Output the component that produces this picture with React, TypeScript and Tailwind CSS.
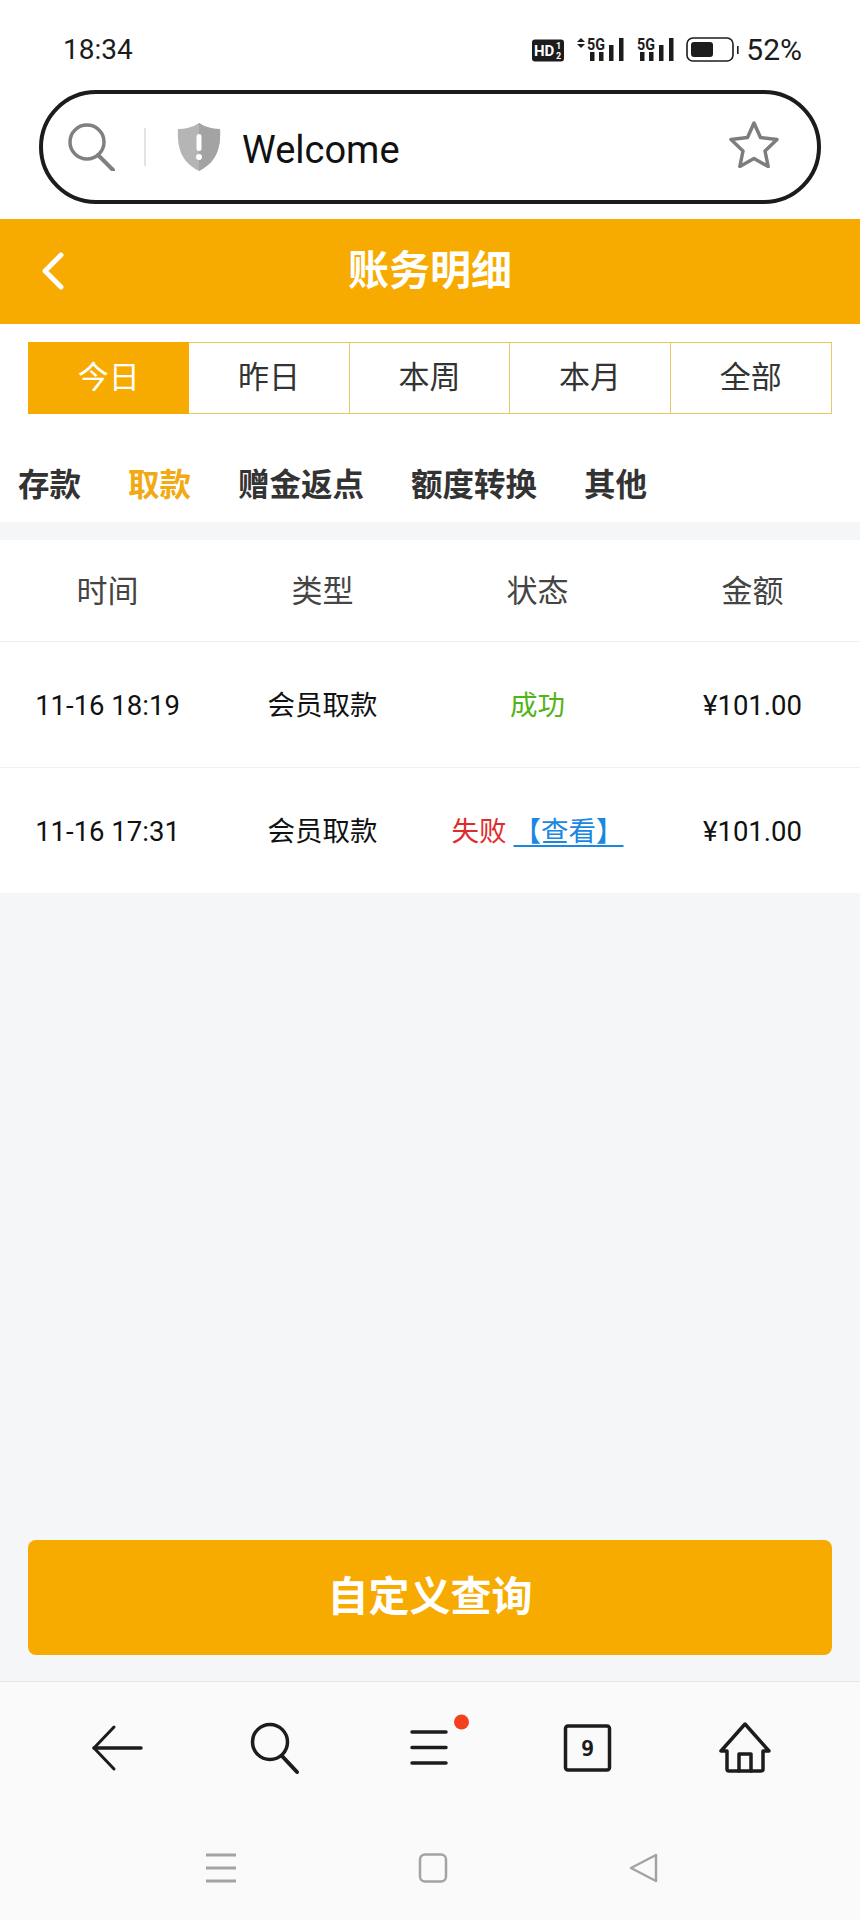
import React from "react";

const ranges = ["今日", "昨日", "本周", "本月", "全部"];
const kinds = ["存款", "取款", "赠金返点", "额度转换", "其他"];
const columns = ["时间", "类型", "状态", "金额"];

const StatusIcons = () => (
  <div className="flex items-center">
    <svg width="33" height="23" viewBox="0 0 33 23" className="mr-[11px] overflow-visible">
      <rect width="32" height="22" y="0.5" rx="3" fill="#1c1c1c" />
      <text x="2" y="17" fontSize="15" fontWeight="700" fill="#fff" fontFamily="Roboto">HD</text>
      <text x="24" y="10" fontSize="9" fontWeight="700" fill="#fff" fontFamily="Roboto">1</text>
      <text x="24" y="20" fontSize="9" fontWeight="700" fill="#fff" fontFamily="Roboto">2</text>
    </svg>
    <svg width="48" height="26" viewBox="0 0 48 26" className="mr-[13px] overflow-visible">
      <path d="M5 1l4 4H1zM5 11l4-4H1z" fill="#1c1c1c" />
      <text x="11" y="13" fontSize="16" fontWeight="700" fill="#1c1c1c" fontFamily="Roboto" textLength="18" lengthAdjust="spacingAndGlyphs">5G</text>
      <rect x="14" y="15" width="4.500" height="9" fill="#1c1c1c" />
      <rect x="23" y="15" width="4.500" height="9" fill="#1c1c1c" />
      <rect x="33" y="8" width="4.500" height="16" fill="#1c1c1c" />
      <rect x="43" y="1" width="4.500" height="23" fill="#1c1c1c" />
    </svg>
    <svg width="37" height="26" viewBox="0 0 37 26" className="mr-[12px] overflow-visible">
      <text x="0" y="13" fontSize="16" fontWeight="700" fill="#1c1c1c" fontFamily="Roboto" textLength="18" lengthAdjust="spacingAndGlyphs">5G</text>
      <rect x="3" y="15" width="4.500" height="9" fill="#1c1c1c" />
      <rect x="12" y="15" width="4.500" height="9" fill="#1c1c1c" />
      <rect x="22" y="8" width="4.500" height="16" fill="#1c1c1c" />
      <rect x="32" y="1" width="4.500" height="23" fill="#1c1c1c" />
    </svg>
    <svg width="55" height="26" viewBox="0 0 55 26" className="mr-[5px]">
      <rect x="1" y="1" width="46" height="23" rx="6" fill="none" stroke="#1c1c1c" strokeWidth="1.6" />
      <rect x="5" y="5" width="22" height="15" rx="3" fill="#1c1c1c" />
      <rect x="51" y="9" width="1.600" height="8" fill="#1c1c1c" />
    </svg>
    <span className="text-[30px] text-[#1c1c1c] leading-none">52%</span>
  </div>
);

const BackArrow = () => (
  <svg width="60" height="60" viewBox="0 0 60 60" fill="none" stroke="#1c1c1c" strokeLinecap="round" strokeLinejoin="round">
    <path d="M6 30h47" strokeWidth="3.5" />
    <path d="M26 9L6 30l20 21" strokeWidth="3" />
  </svg>
);

const SearchGlyph = () => (
  <svg width="60" height="60" viewBox="0 0 60 60" fill="none" stroke="#1c1c1c" strokeLinecap="round">
    <circle cx="25" cy="24" r="17.500" strokeWidth="3.5" />
    <path d="M37 38l15 16" strokeWidth="4" />
  </svg>
);

const MenuGlyph = () => (
  <svg width="60" height="60" viewBox="0 0 60 60" fill="none" className="overflow-visible">
    <path d="M10 14h34M10 29.500h34M10 45h34" stroke="#1c1c1c" strokeWidth="3.5" strokeLinecap="round" />
    <circle cx="59.500" cy="4" r="7.500" fill="#f5401e" />
  </svg>
);

const TabsGlyph = () => (
  <svg width="60" height="60" viewBox="0 0 60 60" fill="none">
    <rect x="7.500" y="8" width="44" height="44" rx="2.500" stroke="#1c1c1c" strokeWidth="3.5" />
    <text x="29.500" y="38" textAnchor="middle" fontSize="22" fontWeight="700" fill="#1c1c1c" fontFamily="DejaVu Sans Mono">9</text>
  </svg>
);

const HomeGlyph = () => (
  <svg width="60" height="60" viewBox="0 0 60 60" fill="none" stroke="#1c1c1c" strokeWidth="3.5" strokeLinejoin="round" strokeLinecap="round">
    <path d="M30 6L6 33h6v18a2 2 0 0 0 2 2h32a2 2 0 0 0 2-2V33h6z" />
    <path d="M24 53V36h12v17" />
  </svg>
);

export default function App() {
  return (
    <div className="flex flex-col w-[860px] h-[1920px] bg-[#f4f6f8] font-['Roboto','Noto_Sans_CJK_SC',sans-serif]">
      <div className="bg-white">
        {/* status bar */}
        <div className="flex items-center justify-between h-[90px] pl-[63px] pr-[58px] pt-[10px]">
          <span className="text-[28px] text-[#1c1c1c] leading-none">18:34</span>
          <StatusIcons />
        </div>

        {/* browser address bar */}
        <div className="flex items-center h-[114px] mx-[39px] mb-[15px] pl-[24px] pr-[38px] bg-white border-[4px] border-[#1c1c1c] rounded-[57px]">
          <svg width="48" height="48" viewBox="0 0 48 48" fill="none" stroke="#808080" strokeLinecap="round">
            <circle cx="20" cy="19" r="17" strokeWidth="3.5" />
            <path d="M31 32l15 15" strokeWidth="4" />
          </svg>
          <div className="w-[2px] h-[38px] ml-[29px] mr-[31px] bg-[#e4e4e4]" />
          <svg width="44" height="48" viewBox="0 0 44 48">
            <path d="M22 0c6 4 13 6 21 6 1 18-3 33-21 42C4 39 0 24 1 6c8 0 15-2 21-6z" fill="#b5b5b5" />
            <path d="M22 0c6 4 13 6 21 6 1 18-3 33-21 42z" fill="#a3a3a3" />
            <rect x="19.500" y="11" width="5" height="17" rx="2.500" fill="#fff" />
            <circle cx="22" cy="34" r="3" fill="#fff" />
          </svg>
          <span className="ml-[21px] pt-[5px] text-[38px] text-[#111] leading-none">Welcome</span>
          <svg width="50" height="48" viewBox="0 0 50 48" className="ml-auto mb-[6px]" fill="none" stroke="#7d7d7d" strokeWidth="3.5" strokeLinejoin="round">
            <path d="M25 3l6.500 14.500 16.500 2-12 11.500 3.200 15.500L25 38.500 10.800 46.500 14 31 2 19.500l16.500-2z" />
          </svg>
        </div>
      </div>

      {/* page title */}
      <div className="relative flex items-center justify-center h-[105px] bg-[#f7ab00]">
        <svg width="24" height="38" viewBox="0 0 24 38" className="absolute left-[41px] top-[33px]" fill="none" stroke="#fff" strokeWidth="5" strokeLinecap="round" strokeLinejoin="round">
          <path d="M20 3L4 19l16 16" />
        </svg>
        <h1 className="text-[41px] font-bold text-white leading-none">账务明细</h1>
      </div>

      <div className="bg-white pt-[18px] h-[198px]">
        {/* date range */}
        <div className="grid grid-cols-5 h-[72px] mx-[28px] border border-[#e9c766]">
          {ranges.map((label, i) => (
            <div
              key={label}
              className={
                i === 0
                  ? "flex items-center justify-center -m-px mr-0 bg-[#f7ab00] text-white text-[31px]"
                  : i === 4
                    ? "flex items-center justify-center text-[#333] text-[31px]"
                    : "flex items-center justify-center border-r border-[#e9c766] text-[#333] text-[31px]"
              }
            >
              {label}
            </div>
          ))}
        </div>

        {/* record kinds */}
        <div className="flex items-center gap-[47px] px-[18px] mt-[48px]">
          {kinds.map((label, i) => (
            <span
              key={label}
              className={i === 1 ? "text-[31.5px] font-bold text-[#f2aa14] leading-[48px]" : "text-[31.5px] font-bold text-[#333] leading-[48px]"}
            >
              {label}
            </span>
          ))}
        </div>
      </div>

      {/* records table */}
      <div className="mt-[18px] bg-white">
        <div className="grid grid-cols-4 items-center h-[102px] pt-[4px] border-b border-[#f0f0f0]">
          {columns.map((label) => (
            <div key={label} className="text-center text-[31px] text-[#444]">{label}</div>
          ))}
        </div>
        <div className="grid grid-cols-4 items-center h-[126px] pt-[3px] border-b border-[#f0f0f0] text-[27.5px] text-[#111]">
          <div className="text-center">11-16 18:19</div>
          <div className="text-center">会员取款</div>
          <div className="text-center text-[#52b416]">成功</div>
          <div className="text-center">¥101.00</div>
        </div>
        <div className="grid grid-cols-4 items-center h-[125px] pt-[3px] text-[27.5px] text-[#111]">
          <div className="text-center">11-16 17:31</div>
          <div className="text-center">会员取款</div>
          <div className="text-center whitespace-nowrap">
            <span className="text-[#e02b2b]">失败</span>
            <span className="ml-[7px] text-[#1a87e0] underline underline-offset-[4px]">【查看】</span>
          </div>
          <div className="text-center">¥101.00</div>
        </div>
      </div>

      <div className="mt-auto mx-[28px] mb-[26px]">
        <button className="w-full h-[115px] rounded-[8px] bg-[#f7ab00] text-white text-[41px] font-bold">自定义查询</button>
      </div>

      {/* browser toolbar and system navigation */}
      <div className="h-[239px] bg-[#fafafa] border-t border-[#e4e6e8]">
        <div className="flex justify-between pl-[88px] pr-[85px] pt-[36px]">
          <BackArrow />
          <SearchGlyph />
          <MenuGlyph />
          <TabsGlyph />
          <HomeGlyph />
        </div>
        <div className="flex justify-between items-center pl-[206px] pr-[201px] mt-[75px]">
          <svg width="30" height="30" viewBox="0 0 30 30" fill="none" stroke="#a3a3a3" strokeWidth="3">
            <path d="M0 2h30M0 15h30M0 28h30" />
          </svg>
          <svg width="30" height="30" viewBox="0 0 30 30" fill="none" stroke="#a3a3a3" strokeWidth="2.500">
            <rect x="2" y="1.500" width="26" height="27" rx="5" />
          </svg>
          <svg width="30" height="30" viewBox="0 0 30 30" fill="none" stroke="#a3a3a3" strokeWidth="2.500" strokeLinejoin="round">
            <path d="M27 2v26L2 15z" />
          </svg>
        </div>
      </div>
    </div>
  );
}
